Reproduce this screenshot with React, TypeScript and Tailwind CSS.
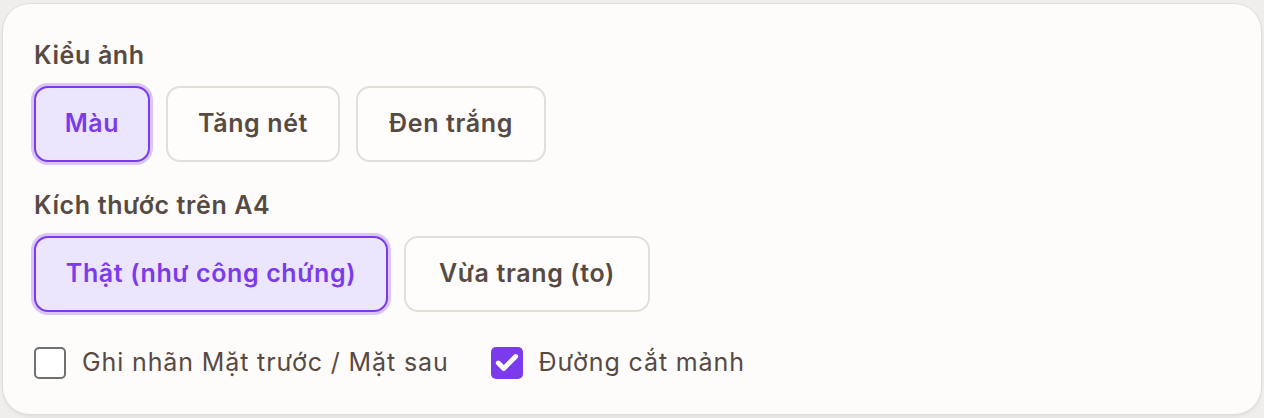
import { Check } from 'lucide-react';

const FONT = "font-['Inter','Noto_Sans',sans-serif]";

function Choice({ label, active, w }: { label: string; active?: boolean; w: string }) {
  return (
    <button
      className={
        'h-[76px] rounded-[14px] border-2 text-[25px] tracking-[0.025em] font-semibold flex items-center justify-center ' +
        w +
        (active
          ? ' border-[#7c3aed] bg-[#ebe5fd] text-[#7c3aed] shadow-[0_0_0_3px_rgba(124,58,237,0.28)]'
          : ' border-[#e2dfdb] bg-[#fefdfc] text-[#574a43]')
      }
    >
      {label}
    </button>
  );
}

function Tick({ label, checked }: { label: string; checked?: boolean }) {
  return (
    <label className="flex items-center gap-4 h-8">
      {checked ? (
        <span className="w-8 h-8 rounded-[5px] bg-[#7c3aed] flex items-center justify-center text-white">
          <Check size={26} strokeWidth={4.5} />
        </span>
      ) : (
        <span className="w-8 h-8 rounded-[5px] border-2 border-[#707070] bg-white" />
      )}
      <span className="text-[25px] tracking-[0.035em] text-[#574a43]">{label}</span>
    </label>
  );
}

export default function App() {
  return (
    <div className={'min-h-[418px] bg-[#efeeec] pt-[3px] px-[2px] ' + FONT}>
      <div className="h-[412px] rounded-[28px] border border-[#e0ddd9] bg-[#fdfcfb] shadow-[0_2px_3px_rgba(0,0,0,0.06)] px-[31px] pt-[35px]">
        <div className="text-[25px] tracking-[0.025em] leading-8 font-semibold text-[#574a43]">Kiểu ảnh</div>
        <div className="mt-[15px] flex gap-4">
          <Choice label="Màu" active w="w-[116px]" />
          <Choice label="Tăng nét" w="w-[174px]" />
          <Choice label="Đen trắng" w="w-[190px]" />
        </div>
        <div className="mt-[27px] text-[25px] tracking-[0.025em] leading-8 font-semibold text-[#574a43]">Kích thước trên A4</div>
        <div className="mt-[15px] flex gap-4">
          <Choice label="Thật (như công chứng)" active w="w-[354px]" />
          <Choice label="Vừa trang (to)" w="w-[246px]" />
        </div>
        <div className="mt-[35px] flex gap-[42px]">
          <Tick label="Ghi nhãn Mặt trước / Mặt sau" />
          <Tick label="Đường cắt mảnh" checked />
        </div>
      </div>
    </div>
  );
}
